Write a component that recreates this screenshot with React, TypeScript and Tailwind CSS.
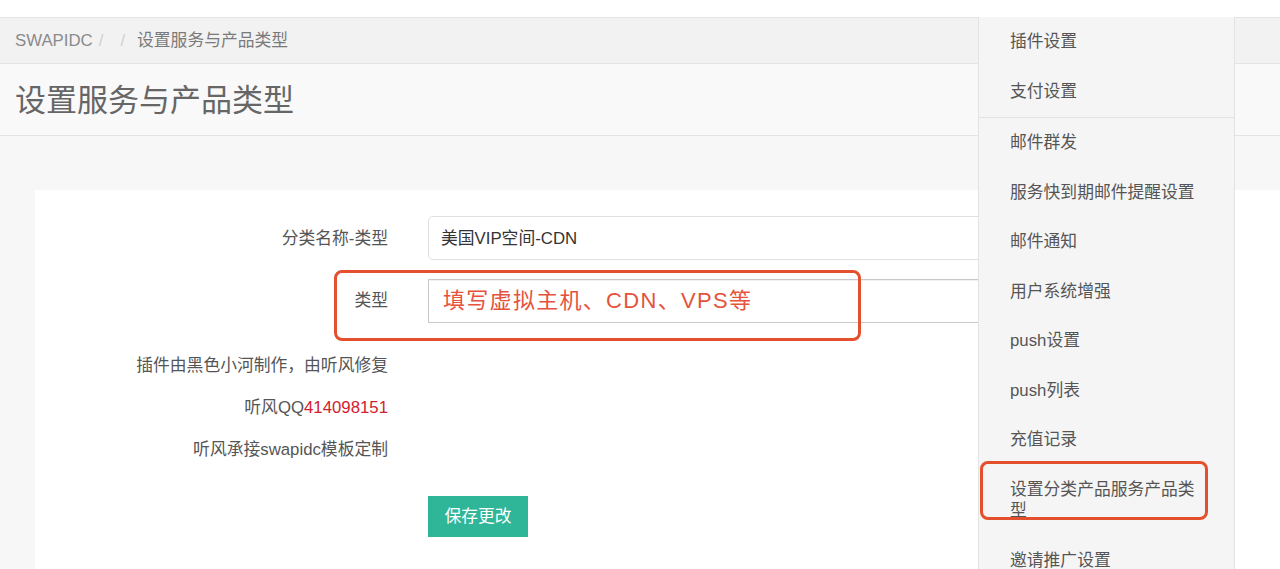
import React from "react";

const FONT = {
  fontFamily:
    '"Liberation Sans", "Noto Sans CJK SC", "Noto Sans", sans-serif',
};

const menuTop = ["插件设置", "支付设置"];
const menuBottom = [
  "邮件群发",
  "服务快到期邮件提醒设置",
  "邮件通知",
  "用户系统增强",
  "push设置",
  "push列表",
  "充值记录",
  "设置分类产品服务产品类型",
  "邀请推广设置",
];

export default function App() {
  return (
    <div
      className="relative flex h-[569px] w-[1280px] flex-col overflow-hidden bg-[#f7f7f7] text-[16.8px] text-[#555]"
      style={FONT}
    >
      {/* top white band */}
      <div className="h-[17px] shrink-0 bg-white" />

      {/* breadcrumb */}
      <div className="flex h-[46px] shrink-0 items-center border-t border-[#e4e4e4] bg-[#f2f2f2] px-[15px] leading-[21px]">
        <span className="text-[#8a8a8a]">SWAPIDC</span>
        <span className="ml-[6px] text-[#cfcfcf]">/</span>
        <span className="ml-[17px] text-[#cfcfcf]">/</span>
        <span className="ml-[12px] text-[#7a7a7a]">设置服务与产品类型</span>
      </div>

      {/* title */}
      <div className="flex h-[73px] shrink-0 items-center border-y border-[#e4e4e4] bg-[#f9f9f9] px-[15px] pt-[2px]">
        <h1 className="text-[31px] font-normal leading-[40px] text-[#666]">
          设置服务与产品类型
        </h1>
      </div>

      {/* body */}
      <div className="flex flex-1 flex-col pl-[35px] pt-[54px]">
        <div className="flex-1 bg-white pr-[60px] pt-[26px]">
          {/* row 1 */}
          <div className="flex h-[44px] items-center">
            <label className="w-[353px] text-right leading-[21px]">
              分类名称-类型
            </label>
            <div className="ml-[40px] flex h-[44px] flex-1 items-center rounded-[5px] border border-[#e0e0e0] bg-white pl-[12px] leading-[21px] text-[#333]">
              美国VIP空间-CDN
            </div>
          </div>

          {/* row 2 */}
          <div className="mt-[19px] flex h-[44px] items-center">
            <label className="w-[353px] pb-[2px] text-right leading-[21px]">
              类型
            </label>
            <div className="ml-[40px] flex h-[44px] flex-1 items-center border border-[#c9c9c9] bg-white pl-[14px] text-[22px] leading-[28px] tracking-[1.3px] text-[#e5533c] shadow-[inset_0_1px_1px_rgba(0,0,0,0.06)]">
              填写虚拟主机、CDN、VPS等
            </div>
          </div>

          {/* text rows */}
          <div className="mt-[21px] flex h-[42px] items-center">
            <div className="w-[353px] text-right leading-[21px]">
              插件由黑色小河制作，由听风修复
            </div>
          </div>
          <div className="flex h-[42px] items-center">
            <div className="w-[353px] text-right leading-[21px]">
              听风QQ<span className="text-[#d3202e]">414098151</span>
            </div>
          </div>
          <div className="flex h-[42px] items-center">
            <div className="w-[353px] text-right leading-[21px]">
              听风承接swapidc模板定制
            </div>
          </div>

          {/* button */}
          <div className="mt-[26px] flex">
            <div className="ml-[393px] flex h-[41px] w-[100px] items-center justify-center bg-[#2fb597] leading-[21px] text-white">
              保存更改
            </div>
          </div>
        </div>
      </div>

      {/* annotation box around 类型 row */}
      <div className="pointer-events-none absolute left-[334px] top-[270px] h-[71px] w-[527px] rounded-[8px] border-[3px] border-[#e4502d]" />

      {/* dropdown menu */}
      <div className="absolute bottom-0 left-[978px] top-[17px] w-[257px] border-x border-[#e3e3e3] bg-[#f5f5f5]">
        {menuTop.map((m) => (
          <div
            key={m}
            className="px-[31px] py-[14px] leading-[21.5px] text-[#555]"
          >
            {m}
          </div>
        ))}
        <div className="my-[0.5px] h-px bg-[#e2e2e2]" />
        {menuBottom.map((m) => (
          <div
            key={m}
            className="py-[14px] pl-[31px] pr-[38px] leading-[21.5px] text-[#555]"
          >
            {m}
          </div>
        ))}
      </div>

      {/* annotation box around menu item */}
      <div className="pointer-events-none absolute left-[980px] top-[461px] h-[59px] w-[228px] rounded-[8px] border-[3px] border-[#e4502d]" />
    </div>
  );
}
